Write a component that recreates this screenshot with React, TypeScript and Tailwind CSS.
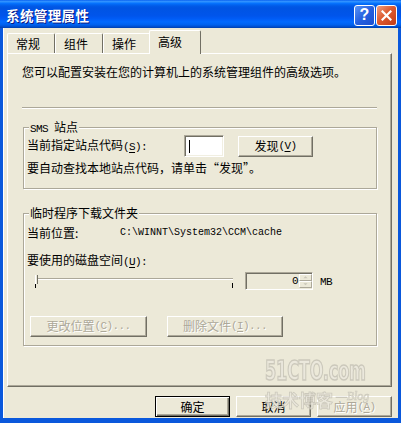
import type { ReactNode } from 'react';
import clsx from 'clsx';

// latin text in SimSun is half-width monospace, so mix in a narrow mono
const L = ({ children }: { children: ReactNode }) => (
  <span className="font-['Liberation_Mono',monospace] text-[11px] tracking-[-0.6px]">{children}</span>
);

const Key = ({ k }: { k: string }) => (
  <L>
    (<span className="underline underline-offset-[2px]">{k}</span>)
  </L>
);

interface ButtonProps {
  children: ReactNode;
  className?: string;
  isDefault?: boolean;
  disabled?: boolean;
}

const Button = ({ children, className, isDefault, disabled }: ButtonProps) => (
  <div
    className={clsx(
      'flex h-[21px] shrink-0 items-center justify-center border text-[12px] leading-[14px]',
      isDefault
        ? 'border-black shadow-[inset_1px_1px_0_#fff,inset_-1px_-1px_0_#716f64,inset_-2px_-2px_0_#aca899]'
        : 'border-t-white border-l-white border-r-[#716f64] border-b-[#716f64] shadow-[inset_-1px_-1px_0_#aca899]',
      disabled ? 'text-[#aca899] [text-shadow:1px_1px_0_#fff]' : 'text-black',
      className,
    )}
  >
    {children}
  </div>
);

const Group = ({ title, children, className }: { title: ReactNode; children: ReactNode; className?: string }) => (
  <div
    className={clsx(
      'relative ml-[1px] border border-[#aca899] pl-[3px] shadow-[inset_1px_1px_0_#fff,1px_1px_0_#fff]',
      className,
    )}
  >
    <span className="absolute -top-[8px] left-[5px] bg-[#ece9d8] px-[1px] leading-[14px]">{title}</span>
    {children}
  </div>
);

const Tab = ({ label, selected }: { label: string; selected?: boolean }) => (
  <div
    className={clsx(
      'flex items-center rounded-t-[2px] border-l border-t border-r border-l-white border-t-white border-r-[#716f64] bg-[#ece9d8] pl-[8px] leading-[14px]',
      selected ? 'relative z-10 -ml-[2px] h-[24px] w-[52px] pb-[2px]' : 'mt-[3px] h-[20px] w-[48px]',
    )}
  >
    {label}
  </div>
);

const TitleBar = () => (
  <div className="flex h-[28px] shrink-0 items-center justify-between bg-[linear-gradient(to_bottom,#0058ee_0%,#3593ff_4%,#288eff_7%,#127dff_10%,#036ffc_13%,#0262ee_18%,#0057e5_24%,#0054e3_30%,#0055eb_56%,#005bf5_66%,#026afe_78%,#0062ef_88%,#0052d6_94%,#0040ab_100%)] pl-[6px] pr-[4px] pt-[2px]">
    <span className="text-[13.5px] font-bold tracking-[0.4px] text-white [text-shadow:1px_1px_0_#0a1883]">系统管理属性</span>
    <div className="flex gap-[1px]">
      <div className="flex h-[21px] w-[21px] items-center justify-center rounded-[3px] border border-white bg-[linear-gradient(135deg,#5a94f5,#2560e0_50%,#1b4fcf)] font-['Liberation_Sans',sans-serif] text-[16px] font-bold leading-none text-white">
        ?
      </div>
      <div className="flex h-[21px] w-[21px] items-center justify-center rounded-[3px] border border-white bg-[linear-gradient(135deg,#f0a080,#dd5a30_45%,#c23c18)]">
        <svg width="11" height="11" viewBox="0 0 11 11">
          <path d="M1.5 1.5 L9.5 9.5 M9.5 1.5 L1.5 9.5" stroke="#fff" strokeWidth="2.2" strokeLinecap="square" />
        </svg>
      </div>
    </div>
  </div>
);

const Slider = () => (
  <div className="relative h-[18px] w-[198px] shrink-0">
    <div className="mt-[6px] h-[2px] border-t border-b border-t-[#aca899] border-b-white" />
    <div className="mt-[3px] flex justify-between">
      <div className="h-[5px] w-[1px] bg-black" />
      <div className="h-[5px] w-[1px] bg-black" />
    </div>
    <div className="absolute left-0 top-[3px] h-[9px] w-[3px] border-l border-r border-l-white border-r-[#716f64] bg-[#ece9d8]" />
  </div>
);

const SpinBox = () => (
  <div className="ml-[12px] flex h-[18px] w-[68px] shrink-0 border border-t-[#aca899] border-l-[#aca899] border-r-white border-b-white shadow-[inset_1px_1px_0_#716f64]">
    <div className="flex flex-1 items-center justify-end pr-[1px] pt-[1px]">
      <L>0</L>
    </div>
    <div className="flex w-[13px] flex-col pt-[1px]">
      {['M2 4 L4.5 1.5 L7 4', 'M2 1.5 L4.5 4 L7 1.5'].map((d) => (
        <div
          key={d}
          className="flex h-[7px] items-center justify-center border border-t-white border-l-white border-r-[#aca899] border-b-[#aca899]"
        >
          <svg width="9" height="5" viewBox="0 0 9 6">
            <path d={d} fill="#c9c6b9" />
          </svg>
        </div>
      ))}
    </div>
  </div>
);

export default function App() {
  return (
    <div
      lang="zh-CN"
      className="relative flex h-[423px] w-[401px] flex-col overflow-hidden bg-[#0a58dc] font-['Noto_Sans_CJK_SC','Liberation_Sans',sans-serif] text-[12px] text-black"
    >
      <TitleBar />
      <div className="mx-[3px] flex h-[390px] flex-col bg-[#ece9d8] shadow-[inset_1px_0_0_#fff]">
        <div className="ml-[4px] flex h-[25px] items-start pt-[2px]">
          <Tab label="常规" />
          <Tab label="组件" />
          <Tab label="操作" />
          <Tab label="高级" selected />
        </div>

        <div className="ml-[4px] mr-[6px] h-[334px] border-l border-t border-r border-b border-l-white border-t-white border-r-[#716f64] border-b-[#716f64] pl-[14px] pr-[14px] pt-[11px] shadow-[inset_-1px_-1px_0_#aca899]">
          <p className="leading-[14px]">您可以配置安装在您的计算机上的系统管理组件的高级选项。</p>
          <div className="mt-[28px] h-[2px] border-t border-b border-t-[#aca899] border-b-white" />

          <Group title={<><L>SMS </L>站点</>} className="mt-[18px] pb-[13px] pt-[7px]">
            <div className="flex h-[22px] items-center">
              <span className="w-[157px] shrink-0 leading-[14px]">
                当前指定站点代码<Key k="S" />
                <L>:</L>
              </span>
              <div className="flex h-[22px] w-[40px] shrink-0 items-center border border-t-[#aca899] border-l-[#aca899] border-r-white border-b-white bg-white pl-[4px] shadow-[inset_1px_1px_0_#716f64,inset_-1px_-1px_0_#f1efe2]">
                <div className="h-[13px] w-[1px] bg-black" />
              </div>
              <Button className="ml-[14px] w-[75px]">
                发现<Key k="V" />
              </Button>
            </div>
            <p className="mt-[4px] leading-[14px]">要自动查找本地站点代码，请单击“发现”。</p>
          </Group>

          <Group title="临时程序下载文件夹" className="mt-[24px] pb-[8px] pt-[12px]">
            <div className="flex leading-[14px]">
              <span className="w-[93px] shrink-0">当前位置:</span>
              <span className="font-['Liberation_Mono',monospace] text-[10px]">C:\WINNT\System32\CCM\cache</span>
            </div>
            <p className="mt-[13px] leading-[14px]">
              要使用的磁盘空间<Key k="U" />
              <L>:</L>
            </p>
            <div className="ml-[8px] mt-[2px] flex items-center">
              <Slider />
              <SpinBox />
              <span className="ml-[7px]">
                <L>MB</L>
              </span>
            </div>
            <div className="ml-[3px] mt-[25px] flex gap-[20px]">
              <Button className="w-[117px]" disabled>
                更改位置<Key k="C" />
                <L>...</L>
              </Button>
              <Button className="w-[116px]" disabled>
                删除文件<Key k="I" />
                <L>...</L>
              </Button>
            </div>
          </Group>
        </div>

        <div className="mt-[9px] flex justify-end gap-[6px] pr-[6px]">
          <Button className="w-[75px]" isDefault>
            确定
          </Button>
          <Button className="w-[75px]">取消</Button>
          <Button className="w-[75px]" disabled>
            应用<Key k="A" />
          </Button>
        </div>
      </div>

      {/* faint site watermark over the lower right corner */}
      <div className="pointer-events-none absolute left-[265px] top-[357px] flex flex-col opacity-80">
        <span className="origin-top scale-y-[1.5] font-['DejaVu_Sans_Condensed',sans-serif] text-[18px] font-bold leading-[17px] tracking-[-0.2px] text-[#ebe8de] [-webkit-text-stroke:1px_#c4c1b5]">
          51CTO.com
        </span>
        <div className="mt-[16px] flex items-start gap-[3px]">
          <span className="text-[17px] font-bold leading-[20px] text-[#ebe8de] [-webkit-text-stroke:0.8px_#c4c1b5]">技术博客</span>
          <span className="font-['Liberation_Serif',serif] text-[12px] italic leading-[12px] text-[#ebe8de] [-webkit-text-stroke:0.6px_#c4c1b5]">
            —Blog
          </span>
        </div>
      </div>
    </div>
  );
}
